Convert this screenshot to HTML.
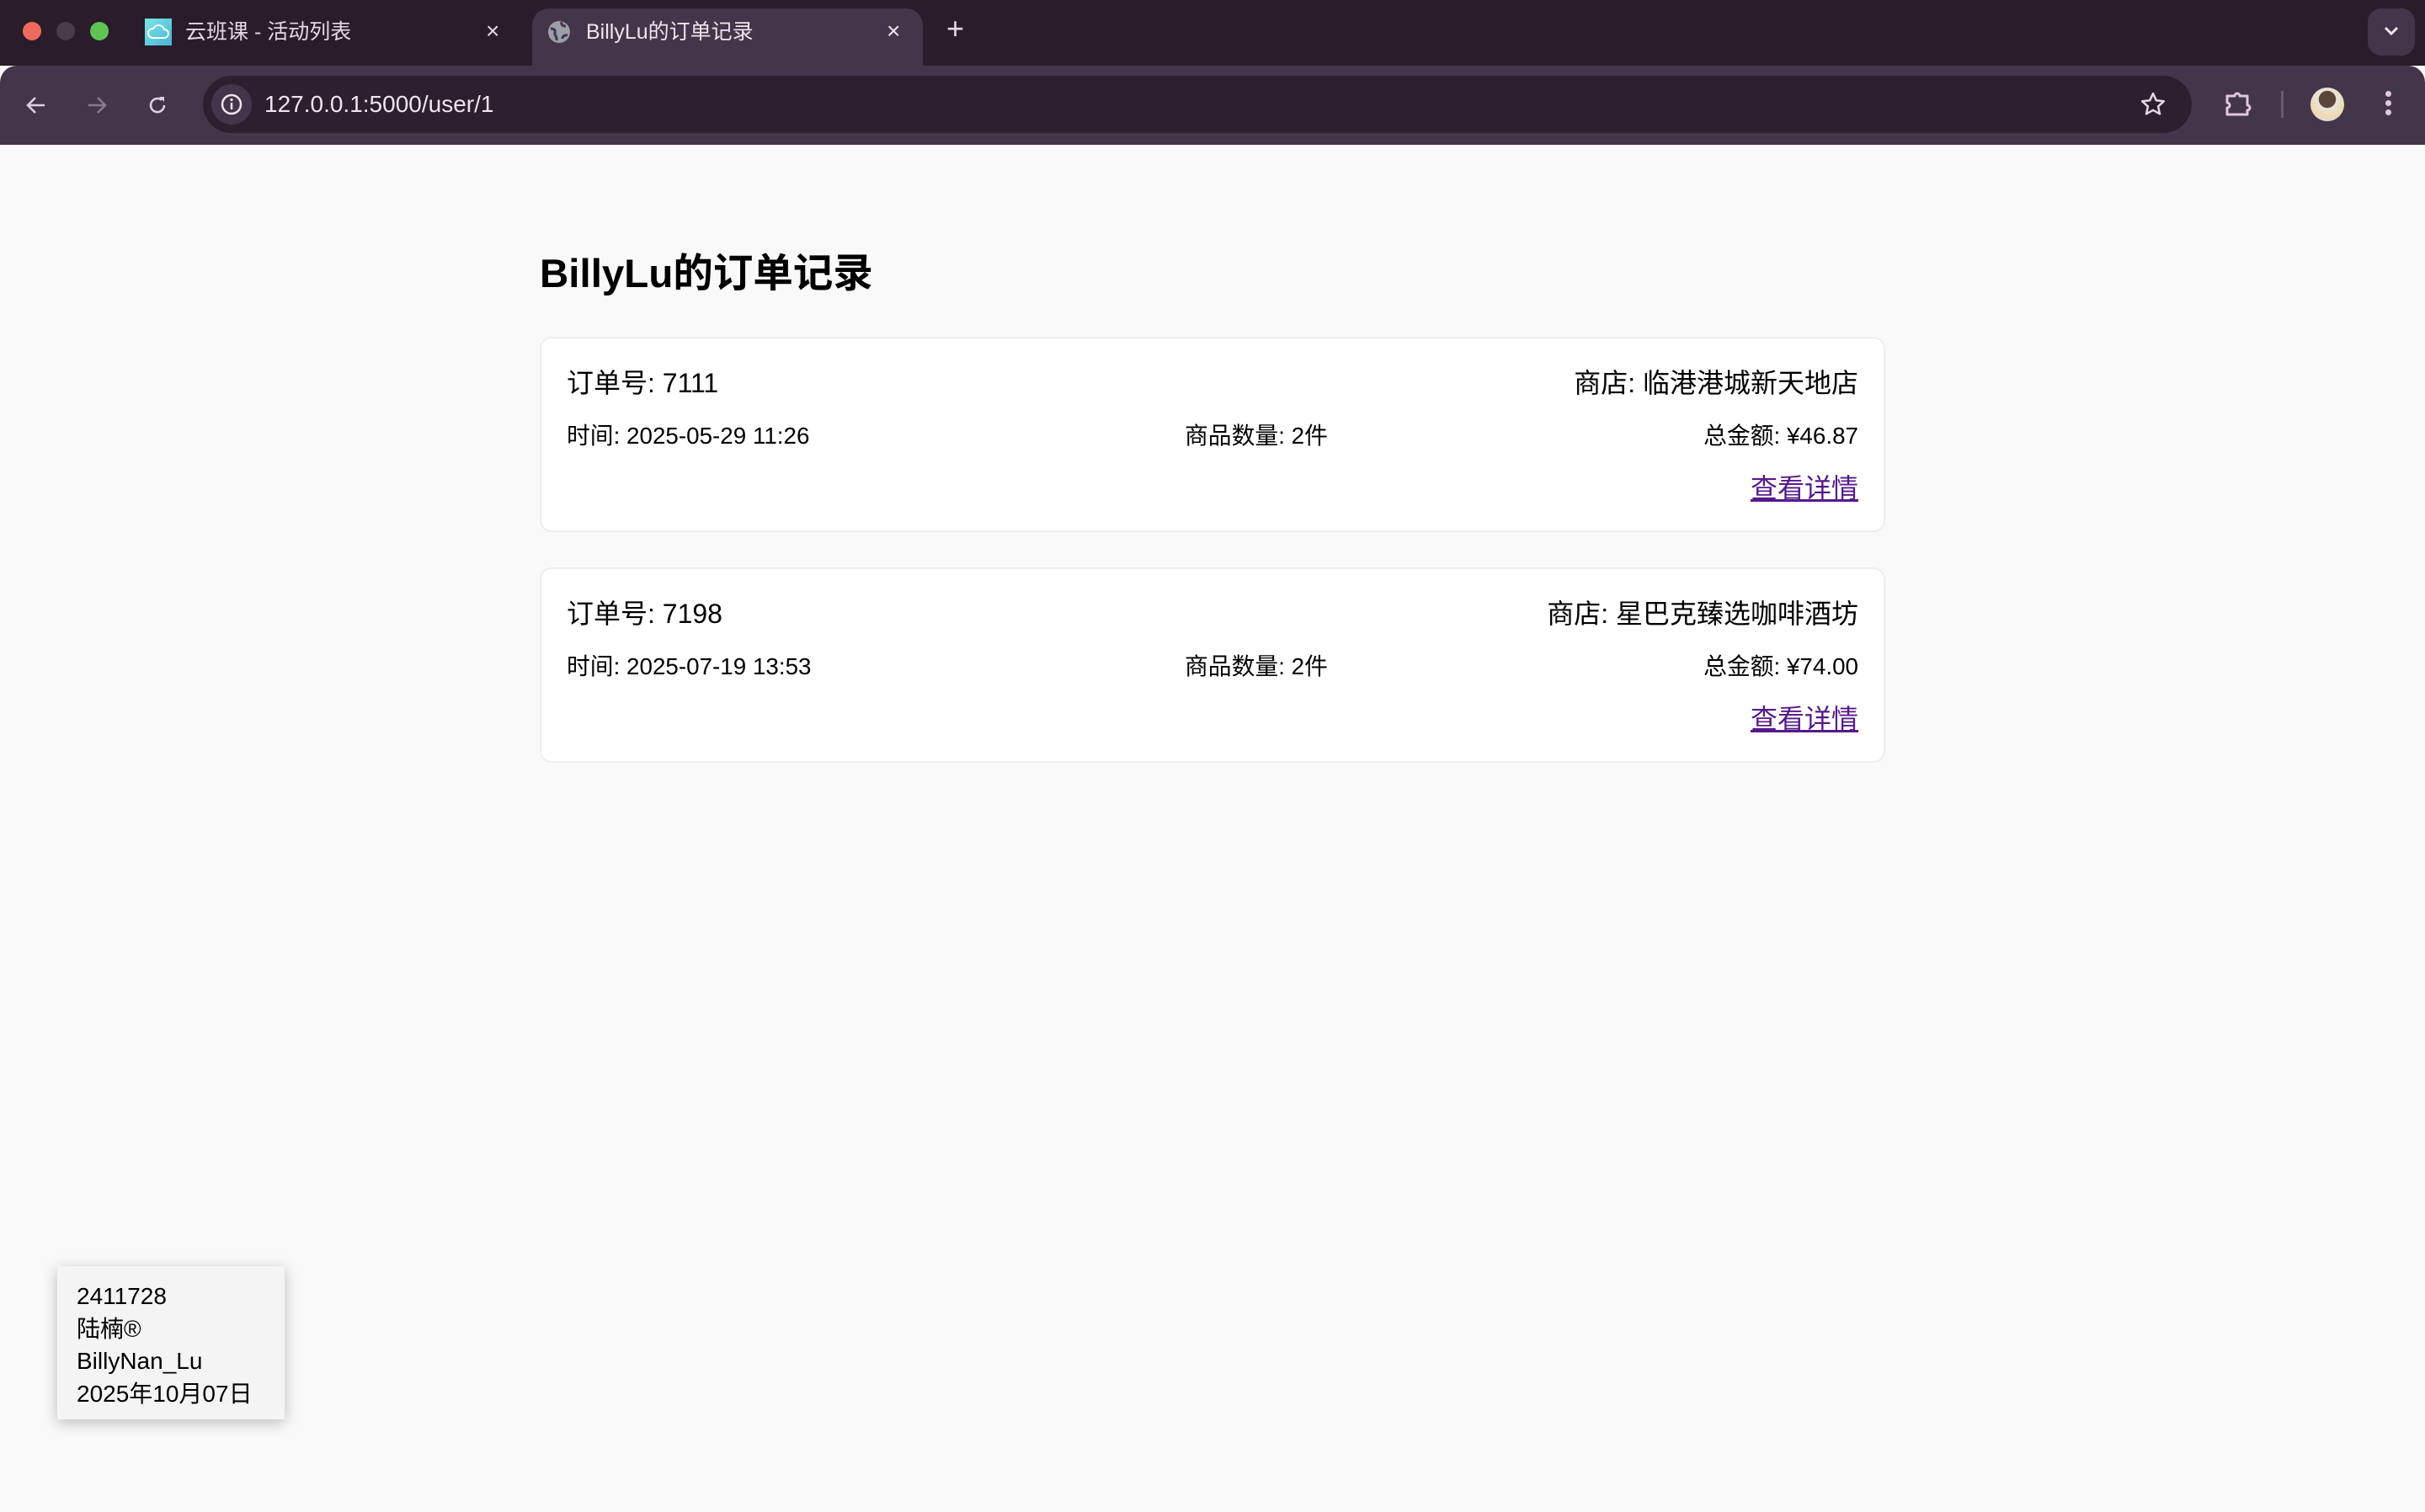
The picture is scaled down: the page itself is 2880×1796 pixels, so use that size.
<!DOCTYPE html>
<html><head><meta charset="utf-8">
<style>
*{margin:0;padding:0;box-sizing:border-box}
html,body{width:2880px;height:1796px;overflow:hidden;background:#f9f9f9;font-family:"Liberation Sans","Noto Sans CJK SC",sans-serif;}
.abs{position:absolute}
#strip{left:0;top:0;width:2880px;height:78px;background:#2a1c2b}
#bar{left:0;top:78px;width:2880px;height:94px;background:#45354a;border-radius:20px 20px 0 0}
.dot{width:22px;height:22px;border-radius:50%;top:26px}
.tabt{color:#e6d6e6;font-size:25px;line-height:30px}
#omni{left:241px;top:90px;width:2362px;height:68px;background:#2d1f2f;border-radius:34px}
.card{position:absolute;left:641px;width:1598px;background:#fff;border:2px solid #eee;border-radius:14px}
.t{position:absolute;white-space:nowrap;color:#000}
.r1{font-size:32px;line-height:40px}
.r2{font-size:27.8px;line-height:34px}
.lk{font-size:32px;line-height:40px;color:#551a8b;text-decoration:underline}
</style></head><body>
<div id="strip" class="abs"></div>
<div class="abs dot" style="left:27px;background:#ee6a5f"></div>
<div class="abs dot" style="left:67px;background:#4a3c4b"></div>
<div class="abs dot" style="left:107px;background:#5fc454"></div>
<div class="abs" style="left:172px;top:22px;width:32px;height:32px;background:linear-gradient(135deg,#7be6e6,#4ab4d4)"></div>
<svg class="abs" style="left:172px;top:22px" width="32" height="32" viewBox="0 0 32 32"><path d="M9 23h14a5 5 0 0 0 0-10 7 7 0 0 0-13-1 5 5 0 0 0-1 11z" fill="none" stroke="#fff" stroke-width="2"/></svg>
<div class="abs tabt" style="left:220px;top:23px">云班课 - 活动列表</div>
<div class="abs tabt" style="left:577px;top:22px;font-size:28px">×</div>
<div class="abs" style="left:632px;top:10px;width:464px;height:80px;background:#45354a;border-radius:20px 20px 0 0"></div>
<svg class="abs" style="left:650px;top:24px" width="28" height="28" viewBox="0 0 28 28"><circle cx="14" cy="14" r="13" fill="#9aa0a6"/><path d="M4 10c4 0 6 2 5 5s3 4 2 9M17 2c-1 4 2 5 5 5M24 18c-3-1-6 1-6 4" stroke="#45354a" stroke-width="3" fill="none"/></svg>
<div class="abs tabt" style="left:696px;top:23px;color:#f0e4f0">BillyLu的订单记录</div>
<div class="abs tabt" style="left:1053px;top:22px;font-size:28px;color:#f0e4f0">×</div>
<div class="abs tabt" style="left:1124px;top:19px;font-size:36px;color:#e6d6e6">+</div>
<div class="abs" style="left:2812px;top:10px;width:56px;height:56px;border-radius:16px;background:#45354a"></div>
<svg class="abs" style="left:2830px;top:30px" width="20" height="14" viewBox="0 0 20 14"><path d="M3 3l7 7 7-7" stroke="#f0e4f0" stroke-width="3" fill="none"/></svg>
<div id="bar" class="abs"></div>
<svg class="abs" style="left:28px;top:110px" width="30" height="30" viewBox="0 0 30 30"><path d="M25 15H6M14 6l-9 9 9 9" stroke="#e0d0e0" stroke-width="2.5" fill="none"/></svg>
<svg class="abs" style="left:100px;top:110px" width="30" height="30" viewBox="0 0 30 30"><path d="M5 15h19M16 6l9 9-9 9" stroke="#8a7a8e" stroke-width="2.5" fill="none"/></svg>
<svg class="abs" style="left:172px;top:110px" width="30" height="30" viewBox="0 0 30 30"><path d="M23 15a8 8 0 1 1-3-6.2" stroke="#e0d0e0" stroke-width="2.5" fill="none"/><path d="M17 5h6v6z" fill="#e0d0e0"/></svg>
<div id="omni" class="abs"></div>
<div class="abs" style="left:251px;top:100px;width:48px;height:48px;border-radius:50%;background:#45354a"></div>
<svg class="abs" style="left:260px;top:109px" width="30" height="30" viewBox="0 0 30 30"><circle cx="15" cy="15" r="11" stroke="#f0e4f0" stroke-width="2.5" fill="none"/><path d="M15 13v8" stroke="#f0e4f0" stroke-width="2.5"/><circle cx="15" cy="9.5" r="1.6" fill="#f0e4f0"/></svg>
<div class="abs" style="left:314px;top:106px;color:#f0e4f0;font-size:28px;line-height:36px">127.0.0.1:5000/user/1</div>
<svg class="abs" style="left:2540px;top:107px" width="34" height="34" viewBox="0 0 34 34"><path d="M17 4l3.8 8.3 9 1-6.7 6.1 1.9 8.9L17 23.8l-8 4.5 1.9-8.9L4.2 13.3l9-1z" stroke="#e6d6e6" stroke-width="2.5" fill="none" stroke-linejoin="round"/></svg>
<svg class="abs" style="left:2640px;top:106px" width="36" height="36" viewBox="0 0 36 36"><path d="M5 8h9a3 3 0 0 1 6 0h9v11a3 3 0 0 1 0 6v5H5v-8a3 3 0 0 0 0-6z" stroke="#e0c8e0" stroke-width="3" fill="none" stroke-linejoin="round"/></svg>
<div class="abs" style="left:2709px;top:108px;width:3px;height:32px;background:#6a5a6e"></div>
<div class="abs" style="left:2744px;top:104px;width:40px;height:40px;border-radius:50%;background:radial-gradient(circle at 50% 35%,#5a4638 30%,#e8e4e0 32%,#f0d8a8 70%,#dcdcdc 72%)"></div>
<div class="abs" style="left:2833px;top:108px;width:7px;height:7px;border-radius:50%;background:#e0c8e0;box-shadow:0 11px 0 #e0c8e0,0 22px 0 #e0c8e0"></div>

<div class="t" style="left:641px;top:296px;font-size:47.5px;line-height:60px;font-weight:bold">BillyLu的订单记录</div>

<div class="card" style="top:400px;height:232px">
 <div class="t r1" style="left:30px;top:33px">订单号: 7111</div>
 <div class="t r1" style="right:30px;top:33px">商店: 临港港城新天地店</div>
 <div class="t r2" style="left:30px;top:99px">时间: 2025-05-29 11:26</div>
 <div class="t r2" style="left:764px;top:99px">商品数量: 2件</div>
 <div class="t r2" style="right:30px;top:99px">总金额: ¥46.87</div>
 <div class="t lk" style="right:30px;top:158px">查看详情</div>
</div>
<div class="card" style="top:674px;height:232px">
 <div class="t r1" style="left:30px;top:33px">订单号: 7198</div>
 <div class="t r1" style="right:30px;top:33px">商店: 星巴克臻选咖啡酒坊</div>
 <div class="t r2" style="left:30px;top:99px">时间: 2025-07-19 13:53</div>
 <div class="t r2" style="left:764px;top:99px">商品数量: 2件</div>
 <div class="t r2" style="right:30px;top:99px">总金额: ¥74.00</div>
 <div class="t lk" style="right:30px;top:158px">查看详情</div>
</div>

<div class="abs" style="left:68px;top:1504px;width:270px;height:182px;background:#f4f4f4;box-shadow:0 4px 16px rgba(0,0,0,0.25);padding:17px 0 0 23px;font-size:28px;line-height:38.5px;color:#000">2411728<br>陆楠®<br>BillyNan_Lu<br>2025年10月07日</div>
</body></html>
